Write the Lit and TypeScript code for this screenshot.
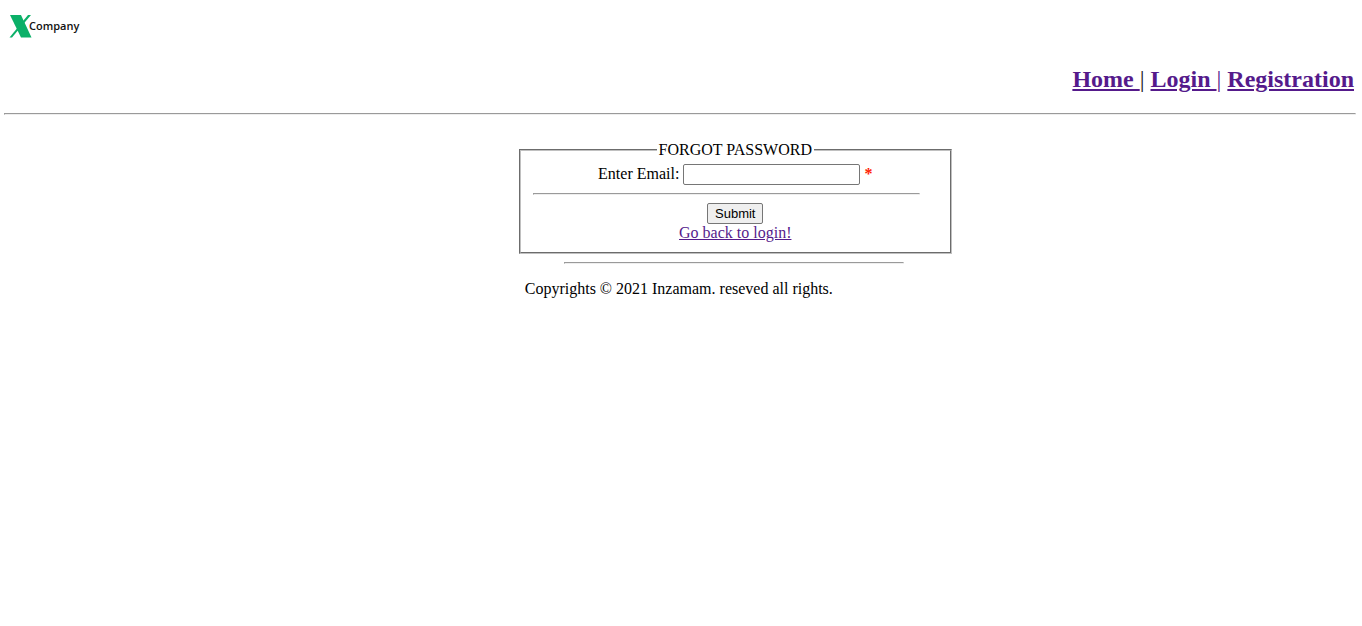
import { LitElement, html, css } from "lit";
import { customElement } from "lit/decorators.js";

@customElement("app-root")
export class AppRoot extends LitElement {
  static styles = css`
    :host {
      display: block;
      padding: 12px 6px 0 4px;
      font: 16px/18px "Liberation Serif", "Times New Roman", serif;
      color: #000;
      background: #fff;
    }
    .logo {
      display: block;
      width: 80px;
      height: 30px;
    }
    .logo text {
      font: 600 11px "Open Sans", sans-serif;
      fill: #111;
    }
    a {
      color: #551a8b;
      text-decoration: underline;
    }
    .nav {
      margin: 23px 2px 0 0;
      font-size: 24px;
      line-height: 28px;
      font-weight: bold;
      text-align: right;
      color: #551a8b;
      white-space: pre;
    }
    .bar {
      font-weight: normal;
    }
    .bar.dark {
      color: #222;
    }
    hr {
      box-sizing: border-box;
      height: 2px;
      margin: 0;
      border: 1px solid;
      border-color: #9a9a9a #eee #eee #9a9a9a;
    }
    .top-rule {
      margin-top: 20px;
    }
    .content {
      width: 433px;
      margin: 26px 0 0 38%;
      padding-left: 1px;
    }
    fieldset {
      margin: 0;
      min-width: 0;
      padding: 5px 12px 10px;
      border: 2px groove #c0c0c0;
      text-align: center;
    }
    legend {
      margin: 0 auto;
      padding: 0 2px;
    }
    .field {
      display: flex;
      justify-content: center;
      align-items: flex-start;
      gap: 4px;
      line-height: 20px;
    }
    input {
      box-sizing: border-box;
      width: 177px;
      height: 21px;
      padding: 1px 2px;
      border: 1px solid #767676;
      border-radius: 2px;
      background: #fff;
      font: 13px "Liberation Sans", Arial, sans-serif;
    }
    .required {
      color: #f20;
      font-weight: bold;
    }
    .form-rule {
      width: 387px;
      margin: 8px 0;
    }
    button {
      display: block;
      box-sizing: border-box;
      height: 21px;
      margin: 0 auto;
      padding: 1px 7px;
      border: 1px solid #767676;
      border-radius: 2px;
      background: #efefef;
      color: #000;
      font: 13px "Liberation Sans", Arial, sans-serif;
    }
    .foot-rule {
      width: 340px;
      margin: 8px 0 0 45px;
    }
    .copy {
      margin: 16px 6px 0;
    }
  `;

  render() {
    return html`
      <header>
        <svg class="logo" viewBox="0 0 80 30" role="img" aria-label="X Company">
          <path d="M6 3h11l10.500 22.500H17z" fill="#0bb068" />
          <path d="M24 3H27L8 25.500H5.500z" fill="#0bb068" />
          <text x="25" y="18">Company</text>
        </svg>
        <nav class="nav"><a href="#home">Home </a><span class="bar dark">| </span><a href="#login">Login </a><span class="bar">| </span><a href="#registration">Registration</a></nav>
      </header>
      <hr class="top-rule" />
      <main class="content">
        <form @submit=${(e: Event) => e.preventDefault()}>
          <fieldset>
            <legend>FORGOT PASSWORD</legend>
            <div class="field">
              <label for="email">Enter Email:</label>
              <input id="email" type="email" required />
              <span class="required">*</span>
            </div>
            <hr class="form-rule" />
            <button type="submit">Submit</button>
            <a href="#login">Go back to login!</a>
          </fieldset>
        </form>
        <hr class="foot-rule" />
        <p class="copy">Copyrights © 2021 Inzamam. reseved all rights.</p>
      </main>
    `;
  }
}
